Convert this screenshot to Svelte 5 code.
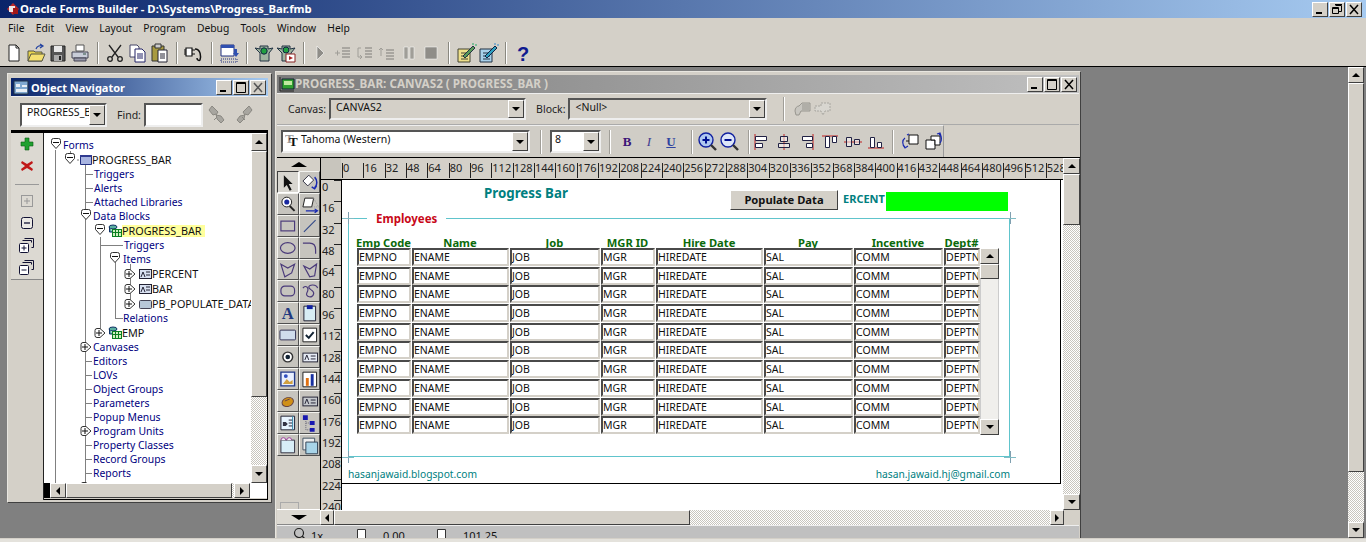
<script>
  const P = '#4a3a7a';
  const mainTools = [
    '<path d="M6 3h7l3 3v13H6z" fill="#fff" stroke="#222"/><path d="M13 3v3h3" fill="none" stroke="#222"/>',
    '<path d="M3 9h6l1 1h7v9H3z" fill="#e8d44c" stroke="#554"/><path d="M3 19l3-7h14l-3 7z" fill="#f4e070" stroke="#554"/><path d="M11 7c1-3 4-4 7-3M15 2l3 2-3 2" fill="none" stroke="#2040a0" stroke-width="1.2"/>',
    '<path d="M4 4h14v15H4z" fill="#555" stroke="#222"/><path d="M7 4h8v6H7z" fill="#e8e8e8"/><path d="M7 13h8v6H7z" fill="#aaa"/><path d="M12 14h2v4h-2z" fill="#222"/>',
    '<path d="M7 3h8v6H7z" fill="#fff" stroke="#555"/><path d="M3 10h16v6H3z" fill="#c8ccd8" stroke="#445"/><path d="M5 16h12v3H5z" fill="#99a" stroke="#445"/><path d="M14 12h3" stroke="#354"/>',
    'SEP',
    '<path d="M5 3l9 12M17 3L8 15" stroke="#222" stroke-width="1.3"/><circle cx="6" cy="17" r="2.3" fill="none" stroke="#222" stroke-width="1.3"/><circle cx="16" cy="17" r="2.3" fill="none" stroke="#222" stroke-width="1.3"/>',
    '<path d="M4 3h7l2 2v10H4z" fill="#fff" stroke="#446"/><path d="M9 7h7l3 3v10H9z" fill="#fff" stroke="#226"/><path d="M11 12h6M11 14h6M11 16h6" stroke="#226"/>',
    '<path d="M4 4h12v15H4z" fill="#a89a40" stroke="#333"/><path d="M7 2h6v4H7z" fill="#ccc" stroke="#333"/><path d="M10 8h9v12h-9z" fill="#fff" stroke="#223"/><path d="M12 12h5M12 14h5M12 16h5" stroke="#223"/>',
    'SEP',
    '<path d="M3 6h6v8H3z" fill="#fff" stroke="#111" stroke-width="1.2"/><path d="M9 8h3M9 12h3M1 8h2M1 10h2M1 12h2" stroke="#111"/><path d="M12 7c6 0 6 8 5 11-1 1-3 0-3-2" fill="none" stroke="#111" stroke-width="1.5"/>',
    'SEP',
    '<path d="M3 3h13v11H3z" fill="#fff" stroke="#203080"/><path d="M3 3h13v3H3z" fill="#3050b0"/><path d="M16 7h3v4h2l-3 4-3-4h1z" fill="#3050b0"/><path d="M3 17h16v3H3z" fill="none" stroke="#203080" stroke-dasharray="1 1"/>',
    'SEP',
    '<path d="M2 6l5 1v-3h8v3l5-1-4 5v8H7v-8z" fill="#9fb49f" stroke="#234"/><circle cx="11" cy="9" r="3.2" fill="#20a040" stroke="#124"/>',
    '<path d="M2 6l5 1v-3h8v3l5-1-4 5v8H7v-8z" fill="#9fb49f" stroke="#234"/><circle cx="11" cy="8" r="3" fill="#20a040" stroke="#124"/><path d="M11 12h9v8h-9z" fill="#fff" stroke="#822"/><path d="M14 14l4 2-4 2z" fill="#a22"/>',
    'SEP',
    '<path d="M7 4l7 7-7 7z" fill="#8f8d88" stroke="#fff" stroke-width=".6"/>',
    '<path d="M3 11h5M5.5 8.5v5" stroke="#a09e98"/><path d="M10 6h8M10 9h8M10 12h8M10 15h8" stroke="#9a9892" stroke-width="1.4"/>',
    '<path d="M7 6H4v9h4M6 13l2 2-2 2" fill="none" stroke="#a09e98"/><path d="M11 6h7M11 9h7M11 12h7M11 15h7" stroke="#9a9892" stroke-width="1.4"/>',
    '<path d="M5 14V6M3 8l2-2 2 2" fill="none" stroke="#a09e98"/><path d="M10 8h8M10 11h8M10 14h8M10 17h8" stroke="#9a9892" stroke-width="1.4"/>',
    '<path d="M6 5h4v12H6zM12 5h4v12h-4z" fill="#a09e98" stroke="#fff" stroke-width=".5"/>',
    '<path d="M5 5h12v12H5z" fill="#8f8d88" stroke="#fff" stroke-width=".5"/>',
    'SEP',
    '<path d="M3 7h12v13H3z" fill="#efe08a" stroke="#443"/><path d="M6 11h7M6 14h7M6 17h7" stroke="#443"/><path d="M8 14L18 4l2 2-10 10z" fill="#5a9a5a" stroke="#234"/><path d="M18 1v2M20 3h2" stroke="#2a6"/>',
    '<path d="M3 7h12v13H3z" fill="#a8d0ea" stroke="#234"/><path d="M6 11h7M6 14h7M6 17h7" stroke="#234"/><path d="M8 14L18 4l2 2-10 10z" fill="#30a0c0" stroke="#124"/><path d="M18 1v2M20 3h2" stroke="#38c"/>',
    'SEP',
    '<text x="11" y="19" text-anchor="middle" font-family="Liberation Sans" font-weight="700" font-size="20" fill="#101a90">?</text>'
  ];
  const rulerH = Array.from({length: 34}, (_, i) => i * 16);
  const rulerV = Array.from({length: 16}, (_, i) => i * 16);
  const cols = ['EMPNO','ENAME','JOB','MGR','HIREDATE','SAL','COMM','DEPTN'];
  const heads = ['Emp Code','Name','Job','MGR ID','Hire Date','Pay','Incentive','Dept#'];
  const rows = Array.from({length: 10}, (_, i) => i);

  const tree = [
    {t:'Forms',x:63},
    {t:'PROGRESS_BAR',x:92,k:1},
    {t:'Triggers',x:94},{t:'Alerts',x:94},{t:'Attached Libraries',x:94},
    {t:'Data Blocks',x:93},
    {t:'PROGRESS_BAR',x:122,k:1,hl:1},
    {t:'Triggers',x:124},{t:'Items',x:123},
    {t:'PERCENT',x:152,k:1},{t:'BAR',x:152,k:1},{t:'PB_POPULATE_DATA',x:152,k:1},
    {t:'Relations',x:123},{t:'EMP',x:122,k:1},
    {t:'Canvases',x:93},{t:'Editors',x:93},{t:'LOVs',x:93},{t:'Object Groups',x:93},
    {t:'Parameters',x:93},{t:'Popup Menus',x:93},{t:'Program Units',x:93},
    {t:'Property Classes',x:93},{t:'Record Groups',x:93},{t:'Reports',x:93}
  ];
  const ys = [145,160,174,188,202,216,231,245,259,274,289,304,318,333,347,361,375,389,403,417,431,445,459,473,487];
  const ry = (i) => ys[i];
  const minus = [[0,56],[1,70],[5,86],[6,100],[8,115]];
  const plus = [[9,130],[10,130],[11,130],[13,100],[14,86],[20,86],[24,86]];
  const dash = [[2,85,93],[3,85,93],[4,85,93],[7,100,123],[12,115,123],[15,85,92],[16,85,92],[17,85,92],[18,85,92],[19,85,92],[21,85,92],[22,85,92],[23,85,92]];
  const colW = [55,98,91,55,108,90,90,37];

  const tools = [
    '<path d="M6 3v13l3-3 3 6 2-1-3-6h4z" fill="#111"/>',
    '<path d="M9 3l-6 6 5 5 6-6z" fill="#fff" stroke="#334"/><path d="M15 5c3 3 3 8 0 11M12 15l3 2 2-3" fill="none" stroke="#1828b0" stroke-width="1.5"/>',
    '<circle cx="9" cy="8" r="5" fill="#fff" stroke="#222"/><circle cx="9" cy="8" r="2.6" fill="#1828a0"/><path d="M12 12l5 5" stroke="#222" stroke-width="2"/>',
    '<path d="M5 4h9l-2 9H3z" fill="#fff" stroke="#222"/><path d="M14 4l5 9h-7" fill="none" stroke="#999" stroke-dasharray="1 1"/><path d="M6 17h12M15 15l3 2-3 2" fill="none" stroke="#1828b0" stroke-width="1.2"/>',
    `<rect x="3" y="5" width="14" height="10" fill="none" stroke="${P}" stroke-width="1.2"/>`,
    `<path d="M4 16L16 4" stroke="#334a8a" stroke-width="1.2"/>`,
    `<ellipse cx="10" cy="10" rx="7.5" ry="5.5" fill="none" stroke="${P}" stroke-width="1.2"/>`,
    `<path d="M3 5h7c4 0 6 3 6 7v4" fill="none" stroke="${P}" stroke-width="1.2"/>`,
    `<path d="M3 4l7 4 7-4-3 9-7 4z" fill="none" stroke="${P}" stroke-width="1.2"/>`,
    `<path d="M4 6l6 3 7-5-2 12-5 1z" fill="none" stroke="${P}" stroke-width="1.2"/>`,
    `<rect x="3" y="5" width="14" height="10" rx="4" fill="none" stroke="${P}" stroke-width="1.2"/>`,
    `<path d="M3 7c3-4 7 0 4 5-2 4 6 6 7 1 1-4-5-4-5-7s8-3 9 1" fill="none" stroke="${P}" stroke-width="1.2"/>`,
    '<text x="10" y="16" text-anchor="middle" font-family="Liberation Serif" font-weight="700" font-size="17" fill="#223a80">A</text>',
    '<path d="M4 3h12v15H4z" fill="#d8eef4" stroke="#223"/><path d="M7 2h6v4H7z" fill="#1020a0"/>',
    '<rect x="2" y="5" width="16" height="10" rx="1" fill="#cfdcec" stroke="#335"/>',
    '<path d="M3 3h14v14H3z" fill="#fff" stroke="#222"/><path d="M6 10l3 3 5-6" fill="none" stroke="#123" stroke-width="2"/>',
    '<circle cx="10" cy="10" r="5" fill="#fff" stroke="#333" stroke-width="1.5"/><circle cx="10" cy="10" r="2.4" fill="#123"/>',
    '<rect x="3" y="6" width="15" height="9" fill="#e6ebf5" stroke="#223"/><path d="M5 13l2-5 2 5M11 9h5M11 12h5" fill="none" stroke="#223"/>',
    '<path d="M3 3h14v14H3z" fill="#e8f0ff" stroke="#223a8a" stroke-width="1.4"/><path d="M5 15l4-5 3 3 3-2v4z" fill="#d0a040"/><circle cx="8" cy="7" r="2" fill="#3050c0"/>',
    '<path d="M3 3h14v15H3z" fill="#fff" stroke="#222"/><path d="M6 9h3v8H6z" fill="#e07010"/><path d="M11 5h3v12h-3z" fill="#1830a0"/>',
    '<ellipse cx="10" cy="11" rx="6" ry="4.5" fill="#d09018" stroke="#644" transform="rotate(-20 10 11)"/><path d="M7 10l5-2" stroke="#644"/>',
    '<rect x="3" y="6" width="15" height="9" fill="#c4c8cc" stroke="#223"/><path d="M5 13l2-5 2 5M11 9h5M11 12h5" fill="none" stroke="#223"/>',
    '<path d="M3 3h14v14H3z" fill="#e8f4ff" stroke="#223"/><path d="M5 9h3l2 2-2 2H5z" fill="#334"/><path d="M11 7h4M11 10h4M11 13h4" stroke="#223"/><path d="M15 3v14" stroke="#38a"/>',
    '<path d="M3 2h5v5H3zM10 8h5v4h-5zM10 15h5v4h-5z" fill="#1818b0"/><path d="M6 8v9h4M6 10h4" fill="none" stroke="#667" stroke-dasharray="1 1"/>',
    '<path d="M3 5h14v13H3z" fill="#d8eef8" stroke="#334"/><path d="M3 5a2 2 0 0 1 5 0M9 5a2 2 0 0 1 5 0" fill="#eee" stroke="#a040a0"/>',
    '<path d="M3 3h12v12H3z" fill="#eee" stroke="#456"/><path d="M6 7h12v12H6z" fill="#a8d4e8" stroke="#345"/>'
  ];
  const al = '#c02020';
  const aligns = [
    `<path d="M5 3v16" stroke="${al}"/><path d="M5.500 5.500h11v4h-11zM5.500 12.500h7v4h-7z" fill="#fff" stroke="#224"/>`,
    `<path d="M11 3v16" stroke="${al}"/><path d="M7.500 5.500h7v5h-7zM5.500 12.500h11v4h-11z" fill="#fff" fill-opacity=".5" stroke="#224"/>`,
    `<path d="M17 3v16" stroke="${al}"/><path d="M6.500 5.500h10v4h-10zM10.500 12.500h6v4h-6z" fill="#fff" stroke="#224"/>`,
    `<path d="M3 5h16" stroke="${al}"/><path d="M6.500 5.500h4v11h-4zM13.500 5.500h4v6h-4z" fill="#fff" stroke="#224"/>`,
    `<path d="M2 11h18" stroke="${al}"/><path d="M4.500 6.500h5v9h-5zM12.500 8.500h5v5h-5z" fill="#fff" fill-opacity=".5" stroke="#224"/>`,
    `<path d="M3 17h16" stroke="${al}"/><path d="M5.500 6.500h4v10h-4zM12.500 11.500h4v5h-4z" fill="#fff" stroke="#224"/>`
  ];
</script>

{#snippet winBtns(restore, disabled)}
  <div class="winbtns">
    <span class="raised wb"><svg width="14" height="13"><path d="M3 9h6v2H3z" fill="#000"/></svg></span>
    <span class="raised wb"><svg width="14" height="13">{#if restore}<path d="M5.500 2.500h6v6H9" fill="none" stroke="#000"/><path d="M2.500 4.500h6v6h-6z" fill="none" stroke="#000"/><path d="M5 1.500h7M2 5.500h7" stroke="#000"/>{:else}<path d="M2.500 1.500h9v10h-9z" fill="none" stroke="#000"/><path d="M2 2.500h10" stroke="#000"/>{/if}</svg></span>
    <span class="raised wb"><svg width="14" height="13"><path d="M3 2l8 9M11 2l-8 9" stroke={disabled ? '#555' : '#000'} stroke-width="1.5"/></svg></span>
  </div>
{/snippet}

{#snippet arrow(dir)}
  <span class="raised sbtn"><i class="tri {dir}"></i></span>
{/snippet}

{#snippet combo(text, w, h, white, icon)}
  <div class="combo" class:white style="width:{w}px;height:{h}px">
    {#if icon}<svg class="fontico" width="16" height="16"><text x="0" y="10" font-family="Liberation Serif" font-weight="700" font-size="13" fill="#999">T</text><text x="4" y="13" font-family="Liberation Serif" font-weight="700" font-size="13" fill="#111">T</text></svg>{/if}
    <span class="combotext">{text}</span>
    <span class="raised cbtn"><i class="tri down"></i></span>
  </div>
{/snippet}

<div class="app">
  <header class="titlebar">
    <svg width="14" height="14" class="tico"><path d="M1 7l6-6 6 6-6 6z" fill="#c02828"/><path d="M3 4h6v6H3z" fill="#f0e8e8"/><path d="M7 6h5v6H7z" fill="#a01818"/></svg>
    <span class="apptitle">Oracle Forms Builder - D:\Systems\Progress_Bar.fmb</span>
    <div class="titlebtns">{@render winBtns(true, false)}</div>
  </header>
  <nav class="menubar">
    {#each ['File','Edit','View','Layout','Program','Debug','Tools','Window','Help'] as m}<span>{m}</span>{/each}
  </nav>
  <div class="toolbar">
    {#each mainTools as t}
      {#if t === 'SEP'}<span class="sep"></span>{:else}<span class="tb"><svg width="22" height="22" viewBox="0 0 22 22">{@html t}</svg></span>{/if}
    {/each}
  </div>

  <main class="mdi">
    <div class="desktop">
      <section class="win nav">
        <div class="wtitle active">
          <svg width="16" height="15"><path d="M1 1h14v13H1z" fill="#7fa8d0" stroke="#234"/><path d="M3 4h4v3H3zM9 5h5v2H9zM3 9h11v3H3z" fill="#e8eef4"/></svg>
          <span>Object Navigator</span>
          {@render winBtns(false, true)}
        </div>
        <div class="navbar">
          <div class="navcombo">{@render combo('PROGRESS_B', 87, 24, true, false)}</div>
          <span class="lbl find">Find:</span>
          <span class="input"></span>
          <svg width="22" height="22" class="gico"><path d="M4 2l6 6-2 3 5 1 3 4-3 3-4-4-1-5-3 1-4-5z" fill="#a8a6a0" stroke="#8a8882"/><path d="M6 16l3-3" stroke="#8a8882"/></svg>
          <svg width="22" height="22" class="gico"><path d="M18 2l-6 6 2 3-5 1-3 4 3 3 4-4 1-5 3 1 4-5z" fill="#a8a6a0" stroke="#8a8882"/><path d="M14 16l-3-3" stroke="#8a8882"/></svg>
        </div>
        <div class="navbody">
          <div class="navtools">
            <div class="ntbox">
              <svg width="20" height="20"><path d="M8 4h4v4h4v4h-4v4H8v-4H4V8h4z" fill="#20a030" stroke="#0a5a10" stroke-width=".6"/></svg>
              <svg width="20" height="20"><path d="M5 5l5 3 5-3 1 2-4 3 4 3-1 2-5-3-5 3-1-2 4-3-4-3z" fill="#c01818"/></svg>
              <span class="ntsep"></span>
              <svg width="20" height="20"><rect x="4.500" y="4.500" width="11" height="11" fill="none" stroke="#999"/><path d="M10 7v6M7 10h6" stroke="#999"/></svg>
              <svg width="20" height="20"><rect x="4.500" y="4.500" width="11" height="11" rx="2" fill="#fff" fill-opacity=".4" stroke="#113"/><path d="M7 10h6" stroke="#113" stroke-width="1.3"/></svg>
              <svg width="20" height="20"><path d="M7.500 3.500h9v9h-2M5.500 5.500h9v2" fill="none" stroke="#113"/><rect x="2.500" y="8.500" width="9" height="9" rx="1" fill="#fff" stroke="#113"/><path d="M7 10.500v5M4.500 13h5" stroke="#113"/></svg>
              <svg width="20" height="20"><path d="M7.500 3.500h9v9h-2M5.500 5.500h9v2" fill="none" stroke="#113"/><rect x="2.500" y="8.500" width="9" height="9" rx="1" fill="#fff" stroke="#113"/><path d="M4.500 13h5" stroke="#113"/></svg>
            </div>
          </div>
          <div class="treewrap">
            <div class="tree">
              {#each tree as r, i}
                <div class="trow" style="padding-left:{r.x - 44}px;height:{ys[i + 1] - ys[i]}px">
                  <span class:blk={r.k} class:hl={r.hl}>{r.t}</span>
                </div>
              {/each}
              <svg class="treelines" width="207" height="350" viewBox="44 133 207 350">
                <path d="M55.500 150V483M85.500 165V483M100.500 237V333M115.500 252V318M130.500 264V304M70.500 151V156M77 160h2M130 273h1" stroke="#808080" fill="none"/>
                {#each dash as d}<path d="M{d[1]} {ry(d[0]) + .5}H{d[2]}" stroke="#808080"/>{/each}
                {#each minus as m}
                  <path d="M{m[1]-4.500} {ry(m[0])-4.500}a2 2 0 0 1 2-2h5a2 2 0 0 1 2 2v3l-4.500 5-4.500-5z" fill="#fff" stroke="#333"/>
                  <path d="M{m[1]-3} {ry(m[0])-2.500}h6" stroke="#111"/>
                {/each}
                {#each plus as m}
                  <path d="M{m[1]-3} {ry(m[0])-4.500}a2 2 0 0 0-2 2v5a2 2 0 0 0 2 2h3l5-4.500-5-4.500z" fill="#fff" stroke="#333"/>
                  <path d="M{m[1]-4} {ry(m[0])}h6M{m[1]-1} {ry(m[0])-3}v6" stroke="#111"/>
                {/each}
                <path d="M80.500 155.500h11v9h-11z" fill="#a8b4e0" stroke="#223080"/><path d="M80 155h12v2H80z" fill="#303a90"/>
                {#each [6, 13] as i}
                  <ellipse cx="113" cy={ry(i)-4} rx="4" ry="2" fill="#5ab0a0" stroke="#136"/>
                  <path d="M109.500 {ry(i)-4}v5h3" fill="#5ab0a0" stroke="#136"/>
                  <rect x="112.500" y={ry(i)-1.500} width="9" height="7" fill="#d0f0c0" stroke="#0a8020"/>
                  <path d="M115.500 {ry(i)-1}v6M118.500 {ry(i)-1}v6M113 {ry(i)+1.500}h8" stroke="#0a8020"/>
                {/each}
                {#each [9, 10] as i}
                  <rect x="139.500" y={ry(i)-4.500} width="12" height="9" fill="#d8e0f0" stroke="#223"/>
                  <path d="M141 {ry(i)+3}l2-5 2 5M146 {ry(i)-2}h4M146 {ry(i)+1}h4" fill="none" stroke="#223"/>
                {/each}
                <rect x="139.500" y={ry(11)-3.500} width="12" height="8" rx="1" fill="#b8c8d8" stroke="#445"/>
              </svg>
            </div>
            <div class="vscroll nvs">
              {@render arrow('up')}
              <span class="raised thumb nvthumb"></span>
              <span class="track"></span>
              {@render arrow('down')}
            </div>
            <div class="hscroll nhs">
              <span class="blackcap"></span>
              {@render arrow('left')}
              <span class="raised thumb nhthumb"></span>
              <span class="track"></span>
              {@render arrow('right')}
              <span class="corner"></span>
            </div>
          </div>
        </div>
      </section>

      <section class="win canvaswin">
        <div class="wtitle inactive">
          <svg width="16" height="16"><path d="M3 3h12v10H3z" fill="#30a030" stroke="#123"/><path d="M5 5h8v4H5z" fill="#c0e8a0"/><path d="M1 1v14h14" fill="none" stroke="#222"/></svg>
          <span>PROGRESS_BAR: CANVAS2 ( PROGRESS_BAR )</span>
          {@render winBtns(false, false)}
        </div>
        <div class="row1">
          <span class="lbl">Canvas:</span>
          {@render combo('CANVAS2', 197, 22, false, false)}
          <span class="lbl blocklbl">Block:</span>
          {@render combo('<Null>', 199, 22, false, false)}
          <span class="vsep"></span>
          <svg width="20" height="20" class="gico2"><path d="M2 12c0-3 2-5 4-5l3-3h8v8H8l-2 4H3z" fill="#c8c6c0" stroke="#98968f"/><path d="M9 6h7M9 8h7M9 10h7" stroke="#98968f"/></svg>
          <svg width="20" height="20" class="gico2"><path d="M2 7h6V4h9v8h-5l-2 4-2-4H2z" fill="#d8d6d0" stroke="#a8a6a0" stroke-dasharray="2 1"/></svg>
        </div>
        <div class="row2">
          <div class="fmtbox">
            {@render combo('Tahoma (Western)', 249, 23, true, true)}
            <span class="vsep v2"></span>
            {@render combo('8', 51, 23, true, false)}
            <span class="vsep v3"></span>
            <span class="fmt b">B</span><span class="fmt i">I</span><span class="fmt u">U</span>
            <span class="vsep v4"></span>
            <svg width="22" height="22"><circle cx="9" cy="9" r="7" fill="#b0c8f0" stroke="#1020a0" stroke-width="1.4"/><path d="M5.500 9h7M9 5.500v7" stroke="#001090" stroke-width="2"/><path d="M14 14l5 5" stroke="#333" stroke-width="2.400"/></svg>
            <svg width="22" height="22"><circle cx="9" cy="9" r="7" fill="#dde6f8" stroke="#1020a0" stroke-width="1.4"/><path d="M5.500 9h7" stroke="#001090" stroke-width="2"/><path d="M14 14l5 5" stroke="#333" stroke-width="2.400"/></svg>
            <span class="vsep v5"></span>
            {#each aligns as a}<svg class="alignico" width="22" height="22" viewBox="0 0 22 22">{@html a}</svg>{/each}
            <span class="vsep v6"></span>
            <svg width="22" height="22"><path d="M9 4h9v9H9z" fill="#fff" stroke="#111"/><path d="M5 7c-3 2-3 7 0 9M3 14l2 3 3-2M7 4l2-1" fill="none" stroke="#1828b0" stroke-width="1.2"/><path d="M6 10h3" stroke="#111"/></svg>
            <svg width="22" height="22"><path d="M4 9h9v9H4z" fill="#fff" stroke="#111"/><path d="M9 5h9v9h-5V9H9z" fill="#fff" stroke="#111"/><path d="M17 3c3 2 3 7 1 9M15 3l3-1 1 3" fill="none" stroke="#1828b0" stroke-width="1.2"/></svg>
          </div>
        </div>

        <div class="editor">
          <aside class="palette">
            <div class="palup"><i class="tri up"></i></div>
            <div class="palgrid">
              {#each tools as t, i}
                <span class="tool" class:down={i === 0}><svg width="20" height="20" viewBox="0 0 20 20">{@html t}</svg></span>
              {/each}
            </div>
            <div class="palfoot">
              <span class="palmini"></span>
              <span class="paldown"><i class="tri down big"></i></span>
            </div>
          </aside>
          <div class="cornerbox"></div>
          <div class="hruler">
            {#each rulerH as n}<span class="hcell">{n}</span>{/each}
          </div>
          <div class="vscroll cvs">
            {@render arrow('up')}
            <span class="raised thumb cvthumb"></span>
            <span class="track"></span>
            {@render arrow('down')}
          </div>
          <div class="vruler">
            {#each rulerV as n}<span class="vcell">{n}</span>{/each}
          </div>
          <div class="canvas">
            <div class="form">
              <div class="formtop">
                <span class="ftitle">Progress Bar</span>
                <span class="raised popbtn">Populate Data</span>
                <span class="percent">ERCENT</span>
                <span class="bar"></span>
              </div>
              <div class="frame">
                <span class="legend">Employees</span>
                <i class="cross tl"></i><i class="cross tr"></i><i class="cross bl"></i><i class="cross br"></i>
                <div class="heads">
                  {#each heads as h, i}<span style="width:{colW[i]}px">{h}</span>{/each}
                </div>
                <div class="block">
                  <div class="records">
                    {#each rows as r}
                      <div class="rec">
                        {#each cols as c, i}<span class="field" style="width:{colW[i] - 1}px">{c}</span>{/each}
                      </div>
                    {/each}
                  </div>
                  <div class="fscroll">
                    {@render arrow('up')}
                    <span class="raised fthumb"></span>
                    <span class="ftrack"></span>
                    {@render arrow('down')}
                  </div>
                </div>
              </div>
              <div class="links"><span>hasanjawaid.blogspot.com</span><span>hasan.jawaid.hj@gmail.com</span></div>
            </div>
          </div>
          <div class="hscroll chs">
            {@render arrow('left')}
            <span class="raised thumb chthumb"></span>
            <span class="track"></span>
            {@render arrow('right')}
            <span class="cornerg"></span>
          </div>
        </div>
        <div class="cstatus">
          <svg width="16" height="14"><circle cx="6" cy="7" r="4.500" fill="none" stroke="#222" stroke-width="1.2"/><path d="M9 10l4 4" stroke="#222" stroke-width="1.4"/></svg>
          <span class="s1">1x</span>
          <svg class="si2" width="14" height="14"><path d="M2.500 3.500h8v11h-8z" fill="#fff" stroke="#333"/></svg>
          <span class="s2">0.00</span>
          <svg class="si3" width="14" height="14"><path d="M2.500 3.500h8v11h-8z" fill="#fff" stroke="#333"/></svg>
          <span class="s3">101.25</span>
        </div>
      </section>
    </div>
    <div class="vscroll mvs">
      {@render arrow('up')}
      <span class="raised thumb mvthumb"></span>
      <span class="track"></span>
      {@render arrow('down')}
    </div>
  </main>
  <div class="statusbar"></div>
</div>

<style>
  :global(body) { margin: 0; background: #d4d0c8; }
  .app {
    width: 1366px; height: 542px; overflow: hidden; display: flex; flex-direction: column;
    background: #d4d0c8; font: 11px/1 "Noto Sans", "Open Sans", sans-serif; color: #111;
  }
  .raised { background: #d4d0c8; border: 1px solid; border-color: #fff #404040 #404040 #fff; box-sizing: border-box; display: flex; align-items: center; justify-content: center; }
  .titlebar {
    height: 18px; flex: none; display: flex; align-items: center; padding: 0 4px 0 6px; box-sizing: border-box;
    background: linear-gradient(90deg, #0a246a, #a6caf0);
  }
  .tico { margin-right: 0; }
  .apptitle { color: #fff; font-weight: 700; font-size: 11.300px; }
  .titlebtns { margin-left: auto; }
  .winbtns { display: flex; gap: 1px; margin-left: auto; }
  .wb { width: 16px; height: 15px; flex: none; }
  .wb svg { display: block; }
  .menubar { height: 21px; flex: none; display: flex; align-items: center; gap: 11.300px; padding: 0 0 0 8px; font-size: 10.300px; }
  .toolbar { height: 27px; flex: none; display: flex; align-items: center; padding-left: 3px; border-bottom: 1px solid #000; box-sizing: content-box; }
  .tb { width: 22px; height: 22px; display: block; }
  .tb svg { display: block; }
  .sep { width: 13px; height: 22px; position: relative; }
  .sep::after { content: ""; position: absolute; left: 6px; top: 0; bottom: 0; width: 1px; background: #8a8880; box-shadow: 1px 0 #fff; }
  .mdi { flex: 1; min-height: 0; display: flex; background: #808080; overflow: hidden; }
  .desktop { flex: 1; position: relative; min-width: 0; }
  .statusbar { height: 3px; flex: none; background: #e4e2dc; border-top: 1px solid #d4d0c8; }
  .win { position: absolute; background: #d4d0c8; border: 1px solid; border-color: #e8e6e0 #404040 #404040 #e8e6e0; box-sizing: border-box; display: flex; flex-direction: column; }
  .wtitle { flex: none; height: 18px; display: flex; align-items: center; gap: 2px; font-weight: 700; padding: 0 2px 0 2px; }
  .wtitle.active { background: linear-gradient(90deg, #0a246a, #a6caf0); color: #fff; font-size: 11px; }
  .wtitle.inactive { background: linear-gradient(90deg, #7c7c7c, #c0c0c0); color: #d4d0c8; font-size: 11.700px; gap: 0; }

  .nav { left: 7px; top: 6px; width: 265px; height: 430px; padding: 4px 3px 1px; }
  .navbar { height: 34px; flex: none; display: flex; align-items: center; padding: 2px 0 0 9px; box-sizing: border-box; border-top: 1px solid #eee; font-size: 10.500px; }
  .navcombo { display: contents; }
  .navcombo .combotext { padding-left: 3px; }
  .combo { display: flex; align-items: stretch; box-sizing: border-box; background: #d4d0c8; border: 2px solid; border-color: #555 #eee #eee #555; flex: none; padding: 0 0 0 2px; position: relative; font-size: 10.500px; }
  .combo.white { background: #fff; }
  .combotext { flex: 1; padding: 2px 0 0 1px; overflow: hidden; white-space: nowrap; }
  .fontico { margin: 1px -1px 0 0; flex: none; }
  .cbtn { width: 16px; flex: none; }
  .tri { display: block; width: 0; height: 0; border: 0 solid transparent; }
  .tri.up { border-width: 0 4px 4px; border-bottom-color: #000; }
  .tri.down { border-width: 4px 4px 0; border-top-color: #000; }
  .tri.left { border-width: 4px 4px 4px 0; border-right-color: #000; }
  .tri.right { border-width: 4px 0 4px 4px; border-left-color: #000; }
  .tri.big { border-width: 5px 8px 0; }
  .lbl { color: #222; flex: none; }
  .find { margin: 2px 4px 0 10px; }
  .input { width: 59px; height: 24px; box-sizing: border-box; background: #fff; border: 2px solid; border-color: #555 #eee #eee #555; flex: none; margin-left: -1px; }
  .gico { margin-left: 5px; }
  .gico + .gico { margin-left: 1px; }
  .navbody { height: 370px; flex: none; display: flex; border-top: 3px solid #000; box-sizing: border-box; }
  .navtools { width: 32px; flex: none; border-right: 1px solid #222; }
  .ntbox { height: 147px; background: #dcd9d2; border-bottom: 1px solid #888; display: flex; flex-direction: column; align-items: center; gap: 2px; padding-top: 1px; box-sizing: border-box; }
  .ntbox svg { flex: none; display: block; }
  .ntsep { height: 1px; width: 24px; background: #999; margin: 6px 0 4px; flex: none; }
  .treewrap { flex: 1; display: grid; grid-template-columns: 207px 16px; grid-template-rows: 350px 16px; background: #000; }
  .tree { position: relative; background: #fff; overflow: hidden; padding-top: 5px; box-sizing: border-box; }
  .trow { display: flex; align-items: center; white-space: nowrap; color: #000080; font-size: 10.400px; position: relative; z-index: 1; }
  .trow .blk { color: #111; font-size: 10.800px; }
  .trow .hl { background: #ffff9c; padding: 1px 3px 1px 0; }
  .treelines { position: absolute; left: 0; top: 0; }
  .vscroll { display: flex; flex-direction: column; }
  .hscroll { display: flex; }
  .sbtn { width: 16px; height: 16px; flex: none; }
  .track { flex: 1; background: repeating-conic-gradient(#fff 0 25%, #c8c5bd 0 50%) 0 0 / 2px 2px; }
  .thumb { flex: none; }
  .nvs { background: #d4d0c8; }
  .nvs .sbtn { height: 18px; }
  .nvthumb { height: 246px; }
  .nhs { grid-column: 1 / 3; background: #d4d0c8; padding-bottom: 1px; box-sizing: border-box; }
  .blackcap { width: 6px; background: #000; flex: none; }
  .nhthumb { width: 166px; }
  .nhs .sbtn { height: 15px; }
  .corner { width: 17px; background: #fff; flex: none; }

  .canvaswin { left: 275px; top: 4px; width: 806px; height: 480px; padding: 3px 1px 0; overflow: hidden; }
  .row1 { height: 32px; flex: none; display: flex; align-items: center; padding-left: 11px; box-sizing: border-box; border-top: 1px solid #eee; border-bottom: 1px solid #aaa; font-size: 10.500px; }
  .row1 .lbl:first-child { margin-right: 3px; }
  .row1 .combotext { padding-left: 3px; }
  .blocklbl { margin: 0 3px 0 10px; }
  .vsep { width: 1px; height: 24px; background: #a09e98; box-shadow: 1px 0 #fff; flex: none; margin: 0 9px 0 16px; }
  .row2 { height: 33px; flex: none; box-sizing: border-box; }
  .fmtbox { width: 667px; height: 32px; box-sizing: border-box; display: flex; align-items: center; padding-left: 4px; background: #d0cdc6; border-top: 1px solid #eee; border-right: 1px solid #999; }
  .v2 { margin: 0 9px 0 10px; }
  .v3 { margin: 0 6px 0 8px; }
  .fmt { width: 22px; text-align: center; font: 700 13px "Liberation Serif", serif; flex: none; }
  .fmt.b { color: #3c1478; }
  .fmt.i { color: #403c90; font-style: italic; font-weight: 400; }
  .fmt.u { color: #3044a0; text-decoration: underline; }
  .v4 { margin: 0 5px 0 9px; }
  .v5 { margin: 0 1px 0 7px; }
  .v6 { margin: 0 7px 0 4px; }
  .fmtbox > svg { flex: none; }
  .alignico { margin-right: 1px; }

  .editor { flex: none; display: grid; grid-template-columns: 43px 21px 722px 17px; grid-template-rows: 22px 330px 15px; background: #000; border-top: 1px solid #000; width: 804px; margin-top: -1px; }
  .palette { grid-row: 1 / 4; grid-column: 1; display: flex; flex-direction: column; background: #d4d0c8; box-sizing: border-box; }
  .palup { height: 13px; display: flex; justify-content: center; align-items: center; background: #d4d0c8; flex: none; }
  .palup .tri.up { border-width: 0 8px 5px; }
  .palgrid { display: grid; grid-template-columns: 21.500px 21.500px; grid-auto-rows: 21.900px; flex: none; }
  .tool { display: flex; align-items: center; justify-content: center; background: #c6c4be; border: 1px solid; border-color: #f4f4f0 #505050 #505050 #f4f4f0; box-sizing: border-box; }
  .tool.down { border-color: #404040 #fff #fff #404040; background: #d8d6d0; }
  .palfoot { flex: 1; display: flex; flex-direction: column; justify-content: flex-end; background: #d4d0c8; }
  .palmini { height: 6px; width: 17px; margin-left: 3px; border: 1px solid #aaa; border-bottom: 0; }
  .paldown { height: 14px; display: flex; align-items: center; justify-content: center; background: #dcd9d2; border-top: 1px solid #fff; border-bottom: 1px solid #888; }
  .cornerbox { background: #c8c5bd; border-bottom: 1px solid #000; border-left: 1px solid #000; box-sizing: border-box; }
  .hruler { display: flex; background: #d4d0c8; overflow: hidden; border-bottom: 1px solid #000; box-sizing: border-box; padding-left: 1px; }
  .hcell { width: 21.333px; flex: none; box-sizing: border-box; border-left: 1px solid #222; height: 15px; margin-top: 5px; padding: 0; font-size: 11px; line-height: 10px; color: #222; white-space: nowrap; }
  .cvs { grid-row: 1 / 3; grid-column: 4; background: #d4d0c8; }
  .cvs .sbtn, .mvs .sbtn { height: 16px; width: 100%; }
  .cvthumb { height: 51px; }
  .vruler { display: flex; flex-direction: column; background: #d4d0c8; overflow: hidden; border-left: 1px solid #000; box-sizing: border-box; }
  .vcell { height: 21.333px; flex: none; box-sizing: border-box; padding: 1px 0 0 1px; background: linear-gradient(#222, #222) right top / 7px 1px no-repeat; font-size: 11px; line-height: 12px; color: #222; }
  .canvas { background: #fff; border-left: 1px solid #000; overflow: hidden; }
  .form { width: 719px; height: 304px; box-sizing: border-box; background: #fff; border: 1px solid #000; border-width: 0 1px 1px 0; padding: 5px 0 0 6px; }
  .formtop { display: flex; align-items: flex-start; height: 33px; }
  .ftitle { margin: 1px 0 0 136px; color: #008080; font-weight: 700; font-size: 13.300px; line-height: 14px; width: 246px; flex: none; white-space: nowrap; }
  .popbtn { width: 108px; height: 20px; margin-top: 5px; font-weight: 700; font-size: 11.200px; flex: none; color: #111; }
  .percent { color: #008080; font-weight: 700; font-size: 11px; margin: 8px 2px 0 5px; width: 41px; flex: none; white-space: nowrap; }
  .bar { width: 122px; height: 19px; margin-top: 7px; background: #00ff00; flex: none; }
  .frame { width: 662px; height: 239px; box-sizing: border-box; border: 1px solid #60c4cc; position: relative; padding: 18px 0 0 8px; }
  .legend { position: absolute; left: 18px; top: -8px; padding: 0 9px; background: #fff; color: #c80818; font-weight: 700; font-size: 11.500px; line-height: 15px; }
  .cross { position: absolute; width: 12px; height: 12px; background: linear-gradient(#80bcc4, #80bcc4) center / 12px 1px no-repeat, linear-gradient(#80a0b0, #80a0b0) center / 1px 12px no-repeat; }
  .cross.tl { left: -7px; top: -7px; }
  .cross.tr { right: -7px; top: -7px; }
  .cross.bl { left: -7px; bottom: -7px; }
  .cross.br { right: -7px; bottom: -7px; }
  .heads { display: flex; height: 11px; color: #0a6a0a; font-weight: 700; font-size: 11.200px; line-height: 12px; margin-left: -1px; }
  .heads span { display: flex; justify-content: center; white-space: nowrap; flex: none; }
  .block { display: flex; }
  .records { display: flex; flex-direction: column; }
  .rec { display: flex; gap: 1px; height: 18.700px; flex: none; }
  .field { height: 18px; box-sizing: border-box; background: #fff; border: 2px solid; border-color: #4a4a4a #d4d0c8 #d4d0c8 #4a4a4a; padding: 1px 0 0 0; font-size: 10.500px; line-height: 13px; overflow: hidden; white-space: nowrap; flex: none; color: #111; }
  .fscroll { width: 19px; display: flex; flex-direction: column; height: 187px; }
  .fscroll .sbtn { width: 19px; }
  .fthumb { height: 15px; flex: none; }
  .ftrack { flex: 1; background: #f0efec; border-left: 1px solid #ccc; border-right: 1px solid #ccc; }
  .links { width: 662px; display: flex; justify-content: space-between; margin-top: 10px; color: #008080; font-size: 10.250px; line-height: 14px; }
  .chs { grid-column: 2 / 5; background: #d4d0c8; }
  .chs .sbtn { height: 15px; width: 14px; }
  .chthumb { width: 356px; }
  .cornerg { width: 16px; background: #d4d0c8; flex: none; }
  .cstatus { height: 14px; flex: none; background: #c0c0c0; display: flex; align-items: flex-start; padding-left: 16px; border-top: 1px solid #eee; font-size: 11px; line-height: 14px; }
  .cstatus span { margin-top: 3px; }
  .s1 { margin-left: 2px; width: 44px; }
  .s2 { margin-left: 14px; width: 52px; }
  .s3 { margin-left: 14px; }
  .mvs { width: 16px; margin-right: 2px; background: #d4d0c8; flex: none; }
  .mvthumb { height: 389px; }
</style>
